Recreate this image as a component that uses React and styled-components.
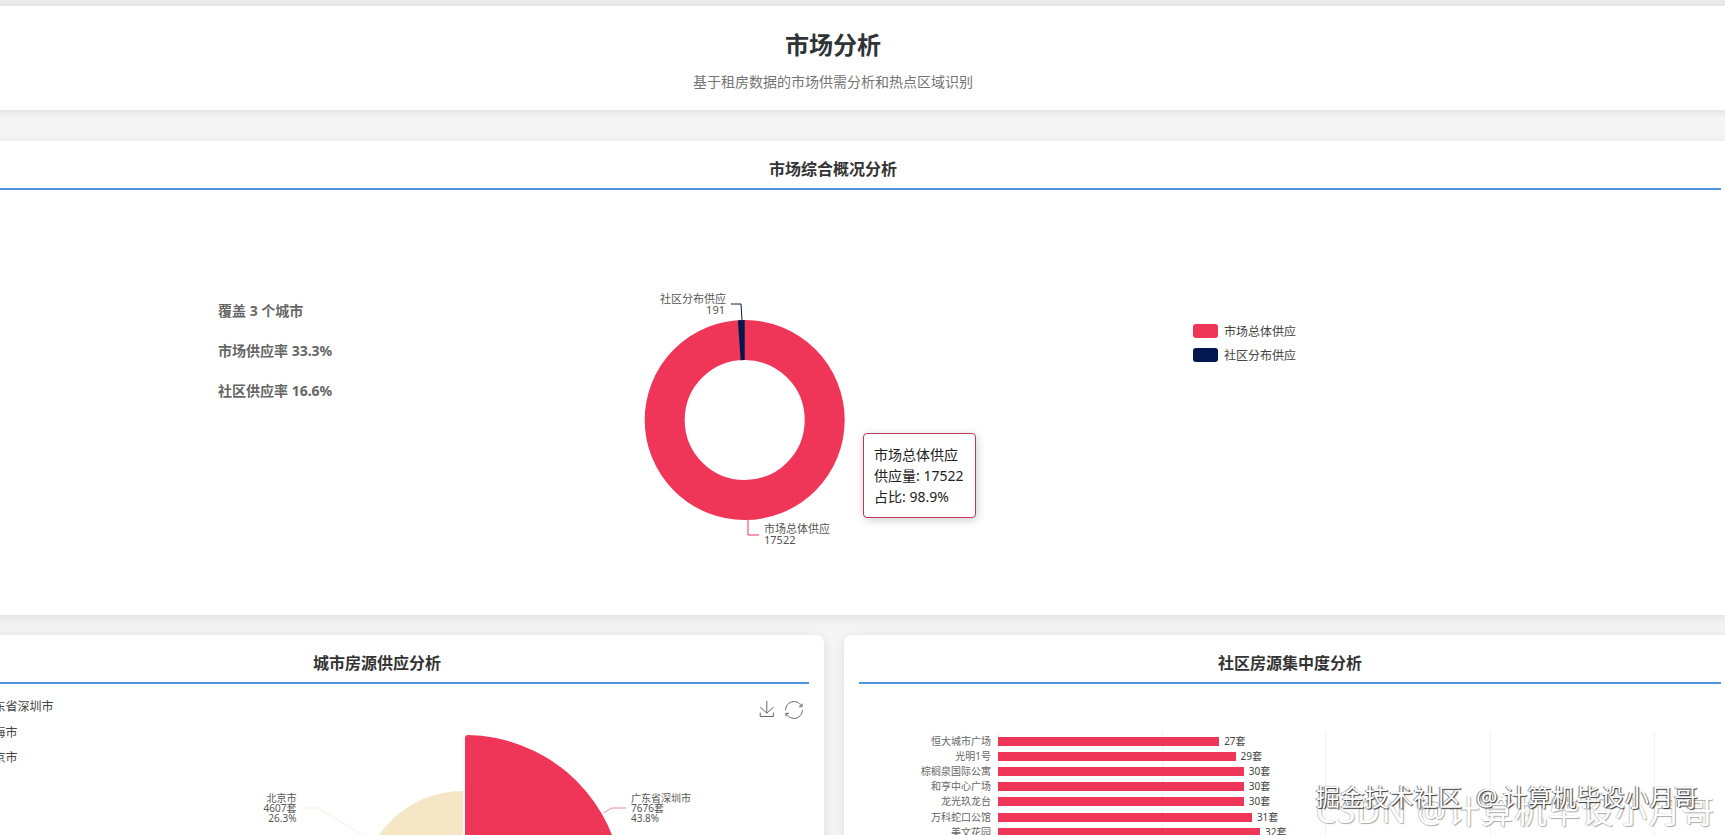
import React from "react";
import styled, { createGlobalStyle } from "styled-components";

const RED = "#ef3558";
const NAVY = "#03184f";
const BEIGE = "#f5e6c6";
const BLUE = "#4f94dc";

const CITY_LEGEND = [
  { name: "广东省深圳市", color: RED, y: 22 },
  { name: "上海市", color: "#03184f", y: 48 },
  { name: "北京市", color: BEIGE, y: 73 }
];

const COMMUNITIES = [
  { name: "恒大城市广场", count: 27 },
  { name: "光明1号", count: 29 },
  { name: "棕榈泉国际公寓", count: 30 },
  { name: "和亨中心广场", count: 30 },
  { name: "龙光玖龙台", count: 30 },
  { name: "万科蛇口公馆", count: 31 },
  { name: "美文花园", count: 32 }
];

const PX_PER_UNIT = 8.19;

const GlobalStyle = createGlobalStyle`
  body {
    margin: 0;
    background: #f5f5f5;
    font-family: "Noto Sans", "Noto Sans CJK SC", sans-serif;
  }
`;

const Page = styled.div`
  position: relative;
  height: 835px;
  overflow: hidden;
  background: #f5f5f5;
`;

const TopStrip = styled.div`
  height: 6px;
  background: #ebebeb;
`;

const Content = styled.div`
  width: 1806px;
  margin-left: -70px;
`;

const Header = styled.header`
  height: 104px;
  box-sizing: border-box;
  padding-top: 21px;
  margin-bottom: 31px;
  background: #fff;
  box-shadow: 0 2px 8px rgba(0, 0, 0, 0.1);
  text-align: center;
`;

const PageTitle = styled.h1`
  margin: 0 0 8px;
  font-size: 24px;
  line-height: 36px;
  font-weight: 700;
  color: #2f3436;
`;

const PageSubtitle = styled.p`
  margin: 0;
  font-size: 14px;
  line-height: 21px;
  color: #747474;
`;

const Card = styled.section`
  box-sizing: border-box;
  padding: 15px;
  background: #fff;
  border-radius: 8px;
  box-shadow: 0 2px 12px rgba(0, 0, 0, 0.1);
`;

const CardTitle = styled.h2`
  margin: 0;
  padding-bottom: 6px;
  font-size: 16px;
  line-height: 27px;
  height: 26px;
  font-weight: 700;
  text-align: center;
  color: #333;
  border-bottom: 2px solid ${BLUE};
`;

const OverviewBody = styled.div`
  display: flex;
  height: 410px;
`;

const StatList = styled.ul`
  width: 382px;
  margin: 0;
  padding: 111px 0 0 273px;
  list-style: none;
  display: flex;
  flex-direction: column;
  gap: 20px;
`;

const Stat = styled.li`
  font-size: 14px;
  line-height: 20px;
  font-weight: 700;
  color: #666;
`;

const DonutFigure = styled.div`
  position: relative;
  width: 420px;
  height: 410px;
`;

const DonutTooltip = styled.div`
  position: absolute;
  left: 263px;
  top: 243px;
  padding: 10px;
  width: 91px;
  background: #fff;
  border: 1px solid #c0395a;
  border-radius: 4px;
  box-shadow: 1px 2px 10px rgba(0, 0, 0, 0.2);
  font-size: 14px;
  line-height: 21px;
  color: #222;
  white-space: nowrap;
`;

const Legend = styled.ul`
  margin: 0 0 0 173px;
  padding: 134px 0 0;
  list-style: none;
  display: flex;
  flex-direction: column;
  gap: 10px;
`;

const LegendItem = styled.li`
  display: flex;
  align-items: center;
  gap: 6px;
  height: 14px;
  font-size: 12px;
  color: #444;
`;

const Swatch = styled.span`
  width: 25px;
  height: 14px;
  border-radius: 3px;
  background: ${p => p.$color};
`;

const SvgCanvas = styled.svg`
  display: block;
`;

const ChartLabel = styled.text`
  font-size: ${p => p.$size || 10}px;
  fill: ${p => p.$color || "#555"};
  dominant-baseline: central;
`;

const BottomRow = styled.div`
  display: grid;
  grid-template-columns: 894px 892px;
  gap: 20px;
  margin-top: 20px;
`;

const ChartBody = styled.div`
  position: relative;
  height: 400px;
`;

const Toolbox = styled.div`
  position: absolute;
  top: 17px;
  right: 6px;
  display: flex;
  align-items: flex-start;
  gap: 10px;
`;

const BarList = styled.div`
  position: relative;
  padding-top: 50px;
`;

const GridLine = styled.span`
  position: absolute;
  top: 48px;
  bottom: 0;
  width: 1px;
  background: #f1f1f1;
`;

const BarRow = styled.div`
  position: relative;
  display: flex;
  align-items: center;
  height: 15.1px;
  font-size: 10px;
`;

const BarName = styled.span`
  width: 132px;
  margin-right: 7px;
  text-align: right;
  color: #666;
  line-height: 13px;
`;

const Bar = styled.span`
  height: 9px;
  background: ${RED};
`;

const BarValue = styled.span`
  margin-left: 5px;
  color: #444;
  line-height: 13px;
`;

const Watermark = styled.div`
  position: absolute;
  left: 1316px;
  white-space: nowrap;
  color: #fff;
`;

const JuejinMark = styled(Watermark)`
  top: 781px;
  font-size: 24px;
  line-height: 32px;
  letter-spacing: 0.4px;
  word-spacing: 7px;
  text-shadow: 1px 1px 1px #333, -1px 0 1px #777;
`;

const AtSign = styled.span`
  margin-right: 5px;
`;

const CsdnMark = styled(Watermark)`
  top: 794px;
  font-size: 32px;
  line-height: 34px;
  letter-spacing: 1.5px;
  text-shadow: 1px 1px 1px #aaa, -1px 0 1px #ccc;
`;

const ICON_STROKE = {
  fill: "none",
  stroke: "#666",
  strokeWidth: 1,
  vectorEffect: "non-scaling-stroke"
};

const SaveIcon = () => (
  <svg width="16" height="16" viewBox="0 0 60 60">
    <path
      {...ICON_STROKE}
      d="M4.7,22.9L29.3,45.5L54.7,23.4M4.6,43.6L4.6,58L53.8,58L53.8,43.6M29.2,45.1L29.2,0"
    />
  </svg>
);

const RestoreIcon = () => (
  <svg width="18" height="18" viewBox="0 0 60 60">
    <path
      {...ICON_STROKE}
      d="M47,18.9h9.8V8.7 M56.3,20.1 C52.1,9,40.5,0.6,26.8,2.1C12.6,3.7,1.6,16.2,2.1,30.6 M13,41.1H3.1v10.2 M3.7,39.9c4.2,11.1,15.8,19.5,29.5,18 c14.2-1.6,25.2-14.1,24.7-28.5"
    />
  </svg>
);

const Donut = () => (
  <DonutFigure>
    <SvgCanvas width="420" height="410">
      <circle cx="144.7" cy="230" r="80" fill="none" stroke={RED} strokeWidth="40" />
      <path
        fill={NAVY}
        d="M137.9 130.23 A100 100 0 0 1 144.7 130 L144.7 170 A60 60 0 0 0 140.62 170.14 Z"
      />
      <path d="M131 114 H141 L142 130" fill="none" stroke={NAVY} />
      <path d="M148 330 V345 H159" fill="none" stroke={RED} />
      <ChartLabel $size={11} x="126" y="108" textAnchor="end">社区分布供应</ChartLabel>
      <ChartLabel $size={11} x="125" y="119" textAnchor="end">191</ChartLabel>
      <ChartLabel $size={11} x="164" y="338">市场总体供应</ChartLabel>
      <ChartLabel $size={11} x="164" y="349">17522</ChartLabel>
    </SvgCanvas>
    <DonutTooltip>
      市场总体供应
      <br />
      供应量: 17522
      <br />
      占比: 98.9%
    </DonutTooltip>
  </DonutFigure>
);

const CityRose = () => (
  <ChartBody>
    <SvgCanvas width="864" height="400">
      {CITY_LEGEND.map(item => (
        <React.Fragment key={item.name}>
          <rect x="7" y={item.y - 7} width="25" height="14" rx="3" fill={item.color} />
          <ChartLabel $size={12} $color="#444" x="36.5" y={item.y}>
            {item.name}
          </ChartLabel>
        </React.Fragment>
      ))}
      <path fill={BEIGE} d="M518 209 V107 A102 102 0 0 0 416.4 217.4 Z" />
      <path
        fill={RED}
        d="M520 209 V54 Q520 51 523 51 A158 158 0 0 1 579.9 355.2 Z"
      />
      <path d="M658.5 129 L666.5 124 H681" fill="none" stroke="#e58aa0" />
      <path d="M417.6 151 L373 124 H359" fill="none" stroke="#f6efe0" />
      <ChartLabel x="686" y="114">广东省深圳市</ChartLabel>
      <ChartLabel x="686" y="124">7676套</ChartLabel>
      <ChartLabel x="686" y="134">43.8%</ChartLabel>
      <ChartLabel x="351.5" y="114" textAnchor="end">北京市</ChartLabel>
      <ChartLabel x="351.5" y="124" textAnchor="end">4607套</ChartLabel>
      <ChartLabel x="351.5" y="134" textAnchor="end">26.3%</ChartLabel>
    </SvgCanvas>
    <Toolbox>
      <SaveIcon />
      <RestoreIcon />
    </Toolbox>
  </ChartBody>
);

const CommunityBars = () => (
  <ChartBody>
    <BarList>
      {[139, 303, 466, 631, 795].map(left => (
        <GridLine key={left} style={{ left }} />
      ))}
      {COMMUNITIES.map(item => (
        <BarRow key={item.name}>
          <BarName>{item.name}</BarName>
          <Bar style={{ width: item.count * PX_PER_UNIT }} />
          <BarValue>{item.count}套</BarValue>
        </BarRow>
      ))}
    </BarList>
  </ChartBody>
);

const App = () => (
  <Page>
    <GlobalStyle />
    <TopStrip />
    <Content>
      <Header>
        <PageTitle>市场分析</PageTitle>
        <PageSubtitle>基于租房数据的市场供需分析和热点区域识别</PageSubtitle>
      </Header>
      <Card>
        <CardTitle>市场综合概况分析</CardTitle>
        <OverviewBody>
          <StatList>
            <Stat>覆盖 3 个城市</Stat>
            <Stat>市场供应率 33.3%</Stat>
            <Stat>社区供应率 16.6%</Stat>
          </StatList>
          <Donut />
          <Legend>
            <LegendItem>
              <Swatch $color={RED} />
              市场总体供应
            </LegendItem>
            <LegendItem>
              <Swatch $color={NAVY} />
              社区分布供应
            </LegendItem>
          </Legend>
        </OverviewBody>
      </Card>
      <BottomRow>
        <Card>
          <CardTitle>城市房源供应分析</CardTitle>
          <CityRose />
        </Card>
        <Card>
          <CardTitle>社区房源集中度分析</CardTitle>
          <CommunityBars />
        </Card>
      </BottomRow>
    </Content>
    <CsdnMark>CSDN @计算机毕设小月哥</CsdnMark>
    <JuejinMark>
      掘金技术社区 <AtSign>@</AtSign>计算机毕设小月哥
    </JuejinMark>
  </Page>
);

export default App;
